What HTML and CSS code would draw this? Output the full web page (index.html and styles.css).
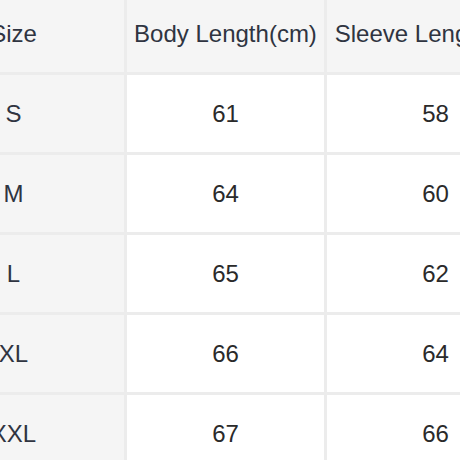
FILE: index.html
```html
<!DOCTYPE html>
<html>
<head>
<meta charset="utf-8">
<link rel="stylesheet" href="styles.css">
</head>
<body>
<div class="wrap">
<table class="size-table">
  <colgroup>
    <col class="c1"><col class="c2"><col class="c3">
  </colgroup>
  <thead>
    <tr><th>Size</th><th>Body Length(cm)</th><th>Sleeve Length(cm)</th></tr>
  </thead>
  <tbody>
    <tr><td class="size">S</td><td>61</td><td>58</td></tr>
    <tr><td class="size">M</td><td>64</td><td>60</td></tr>
    <tr><td class="size">L</td><td>65</td><td>62</td></tr>
    <tr><td class="size">XL</td><td>66</td><td>64</td></tr>
    <tr><td class="size">XXL</td><td>67</td><td>66</td></tr>
  </tbody>
</table>
</div>
</body>
</html>
```

FILE: styles.css
```css
html, body {
  margin: 0;
  padding: 0;
  background: #ffffff;
}
.wrap {
  width: 460px;
  height: 460px;
  overflow: hidden;
}
.size-table {
  margin-top: -5px;
  margin-left: -97px;
  border-collapse: separate;
  border-spacing: 0;
  table-layout: fixed;
  width: 644px;
  font-family: "Liberation Sans", Arial, sans-serif;
  font-size: 24px;
}
.c1 { width: 224px; }
.c2 { width: 200px; }
.c3 { width: 220px; }
.size-table th,
.size-table td {
  height: 77px;
  padding: 0;
  text-align: center;
  vertical-align: middle;
  border-right: 3px solid #ececec;
  border-bottom: 3px solid #ececec;
  white-space: nowrap;
  box-sizing: content-box;
}
.size-table th {
  font-weight: normal;
  color: #2f3441;
  background: #f5f5f5;
}
.size-table td {
  color: #2a2a2a;
  background: #ffffff;
}
.size-table td.size {
  background: #f5f5f5;
  color: #2f3441;
}
```
